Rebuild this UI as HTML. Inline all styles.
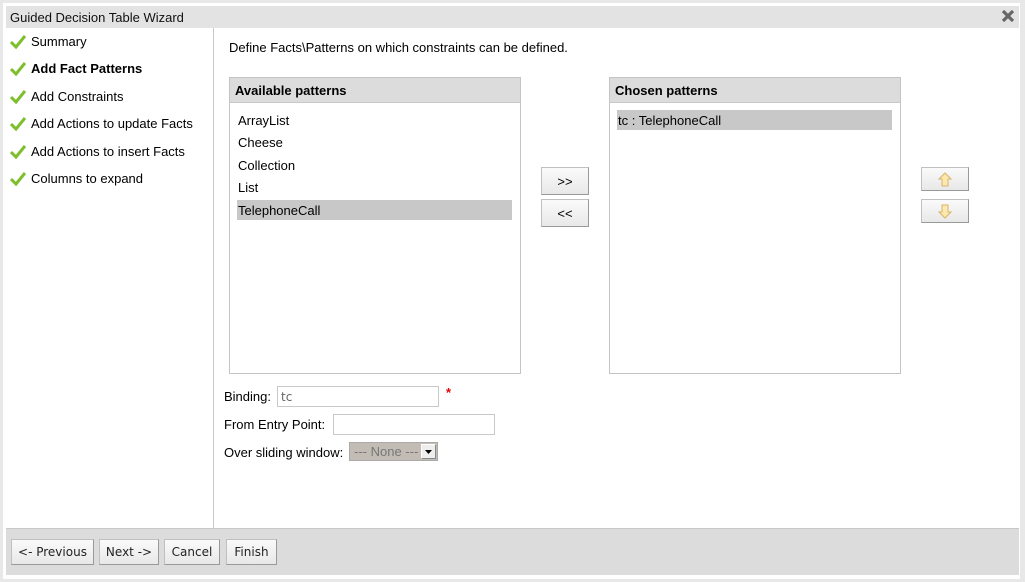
<!DOCTYPE html>
<html><head><meta charset="utf-8"><style>
*{box-sizing:border-box;margin:0;padding:0}
body{width:1025px;height:582px;background:#e8e8e8;font-family:"Liberation Sans",sans-serif;font-size:13px;color:#000;position:relative;overflow:hidden}
.a{position:absolute}
#win{left:3px;top:3px;width:1017px;height:576px;background:#fff}
#title{left:6px;top:6px;width:1013px;height:22px;background:#e3e3e3;font-size:13px;line-height:23px;padding-left:4px;color:#111}
.step{left:10px;height:20px;line-height:22px}
.step span{position:absolute;left:21px;white-space:nowrap}
.box{border:1px solid #c4c4c4;background:#fff}
.hdr{background:#dcdcdc;height:25px;line-height:25px;font-weight:bold;padding-left:5px;border-bottom:1px solid #c8c8c8}
.it{left:7px;height:20px;line-height:21px;padding-left:1px}
.sel{background:#c8c8c8}
.btn{background:linear-gradient(#fafafa,#e8e8e8);border:1px solid #c0c0c0;border-right-color:#999;border-bottom-color:#999;text-align:center;font-family:"DejaVu Sans",sans-serif;font-size:12px}
.inp{border:1px solid #c8c8c8;background:#fff;height:21px}
</style></head><body>
<div id="win" class="a"></div>
<div id="title" class="a">Guided Decision Table Wizard</div>
<svg class="a" style="left:1001px;top:9px" width="14" height="14" viewBox="0 0 14 14"><path d="M2 2L12 12M12 2L2 12" stroke="#666" stroke-width="3.2"/></svg>
<div class="a" style="left:213px;top:28px;width:1px;height:500px;background:#c8c8c8"></div>

<div class="a step" style="top:31px"><svg width="16" height="16" class="a" style="top:3px"><path d="M1 8L6 13L15 2" stroke="#7cbf2a" stroke-width="3" fill="none"/></svg><span>Summary</span></div>
<div class="a step" style="top:58px"><svg width="16" height="16" class="a" style="top:3px"><path d="M1 8L6 13L15 2" stroke="#7cbf2a" stroke-width="3" fill="none"/></svg><span style="font-weight:bold">Add Fact Patterns</span></div>
<div class="a step" style="top:86px"><svg width="16" height="16" class="a" style="top:3px"><path d="M1 8L6 13L15 2" stroke="#7cbf2a" stroke-width="3" fill="none"/></svg><span>Add Constraints</span></div>
<div class="a step" style="top:113px"><svg width="16" height="16" class="a" style="top:3px"><path d="M1 8L6 13L15 2" stroke="#7cbf2a" stroke-width="3" fill="none"/></svg><span>Add Actions to update Facts</span></div>
<div class="a step" style="top:141px"><svg width="16" height="16" class="a" style="top:3px"><path d="M1 8L6 13L15 2" stroke="#7cbf2a" stroke-width="3" fill="none"/></svg><span>Add Actions to insert Facts</span></div>
<div class="a step" style="top:168px"><svg width="16" height="16" class="a" style="top:3px"><path d="M1 8L6 13L15 2" stroke="#7cbf2a" stroke-width="3" fill="none"/></svg><span>Columns to expand</span></div>

<div class="a" style="left:229px;top:40px">Define Facts\Patterns on which constraints can be defined.</div>

<div class="a box" style="left:229px;top:77px;width:292px;height:297px">
<div class="hdr">Available patterns</div>
<div class="a it" style="top:32px">ArrayList</div>
<div class="a it" style="top:54px">Cheese</div>
<div class="a it" style="top:77px">Collection</div>
<div class="a it" style="top:99px">List</div>
<div class="a it sel" style="top:122px;width:275px">TelephoneCall</div>
</div>
<div class="a box" style="left:609px;top:77px;width:292px;height:297px">
<div class="hdr">Chosen patterns</div>
<div class="a it sel" style="top:32px;width:275px">tc : TelephoneCall</div>
</div>

<div class="a btn" style="left:541px;top:167px;width:48px;height:28px;line-height:27px;font-family:'Liberation Sans',sans-serif;font-size:13px">&gt;&gt;</div>
<div class="a btn" style="left:541px;top:199px;width:48px;height:28px;line-height:27px;font-family:'Liberation Sans',sans-serif;font-size:13px">&lt;&lt;</div>
<div class="a btn" style="left:921px;top:167px;width:48px;height:24px"><svg width="14" height="16" style="margin-top:4px"><path d="M7 1L13 7H10V14H4V7H1Z" fill="#fde9b0" stroke="#d8b46a"/></svg></div>
<div class="a btn" style="left:921px;top:199px;width:48px;height:24px"><svg width="14" height="16" style="margin-top:3px"><path d="M7 15L13 9H10V2H4V9H1Z" fill="#fde9b0" stroke="#d8b46a"/></svg></div>

<div class="a" style="left:224px;top:389px">Binding:</div>
<div class="a inp" style="left:277px;top:386px;width:162px;padding-left:3px;line-height:20px;color:#666;font-family:'DejaVu Sans',sans-serif;font-size:12px">tc</div>
<div class="a" style="left:446px;top:385px;color:#e00;font-weight:bold">*</div>
<div class="a" style="left:224px;top:417px">From Entry Point:</div>
<div class="a inp" style="left:333px;top:414px;width:162px"></div>
<div class="a" style="left:224px;top:445px">Over sliding window:</div>
<div class="a" style="left:349px;top:442px;width:89px;height:19px;background:#c2bcb5;border:1px solid #aaa;color:#777;line-height:18px;padding-left:4px">--- None ---
<div class="a" style="right:1px;top:1px;width:15px;height:15px;background:#eee;border:1px solid #888;border-top-color:#fff;border-left-color:#fff"><svg width="13" height="13" class="a" style="left:0;top:0"><path d="M3 5H10L6.5 9Z" fill="#000"/></svg></div></div>

<div class="a" style="left:6px;top:528px;width:1013px;height:47px;background:#dcdcdc;border-top:1px solid #c8c8c8"></div>
<div class="a btn" style="left:11px;top:539px;width:83px;height:26px;line-height:25px;color:#222">&lt;- Previous</div>
<div class="a btn" style="left:99px;top:539px;width:60px;height:26px;line-height:25px;color:#222">Next -&gt;</div>
<div class="a btn" style="left:164px;top:539px;width:56px;height:26px;line-height:25px;color:#222">Cancel</div>
<div class="a btn" style="left:226px;top:539px;width:51px;height:26px;line-height:25px;color:#222">Finish</div>
</body></html>
